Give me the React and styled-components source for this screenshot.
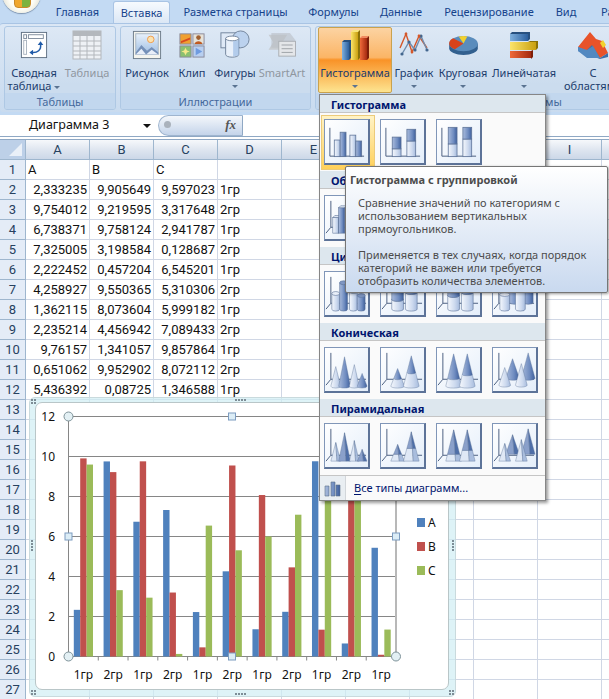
import React from "react";
import styled, { createGlobalStyle } from "styled-components";

const SERIES_A = [2.333235, 9.754012, 6.738371, 7.325005, 2.222452, 4.258927, 1.362115, 2.235214, 9.76157, 0.651062, 5.436392];
const SERIES_B = [9.905649, 9.219595, 9.758124, 3.198584, 0.457204, 9.550365, 8.073604, 4.456942, 1.341057, 9.952902, 0.08725];
const SERIES_C = [9.597023, 3.317648, 2.941787, 0.128687, 6.545201, 5.310306, 5.999182, 7.089433, 9.857864, 8.072112, 1.346588];
const COLUMNS = ["A", "B", "C", "D", "E", "F", "G", "H", "I"];
const TOTAL_ROWS = 27;

const TABS = [
    { label: "Главная", w: 71 },
    { label: "Вставка", w: 57, active: true },
    { label: "Разметка страницы", w: 131 },
    { label: "Формулы", w: 65 },
    { label: "Данные", w: 70 },
    { label: "Рецензирование", w: 106 },
    { label: "Вид", w: 48 },
    { label: "Разработчик", w: 90 },
];

const GlobalStyle = createGlobalStyle`
    html, body {
        margin: 0;
        width: 609px;
        height: 699px;
        overflow: hidden;
        background: #fff;
        font-family: "Noto Sans", "Liberation Sans", sans-serif;
    }
`;

const Page = styled.div`
    position: relative;
    width: 609px;
    height: 699px;
    overflow: hidden;
    background: #fff;
`;

const Header = styled.div`
    background: #c3daf3;
    height: 115px;
    overflow: hidden;
`;

const TabRow = styled.div`
    display: flex;
    height: 23px;
    padding-left: 42px;
    align-items: flex-end;
`;

const Tab = styled.div`
    flex: none;
    box-sizing: border-box;
    width: ${(p) => p.$w}px;
    height: ${(p) => (p.$active ? 22 : 23)}px;
    line-height: 23px;
    text-align: center;
    font-size: 11px;
    white-space: nowrap;
    color: #15428b;
    ${(p) =>
        p.$active &&
        `
        line-height: 21px;
        background: linear-gradient(#f6fafe, #dbe7f5);
        border: 1px solid #a9c4e4;
        border-bottom: none;
        border-radius: 3px 3px 0 0;
    `}
`;

const OfficeButton = styled.div`
    position: absolute;
    left: 2px;
    top: -27px;
    width: 39px;
    height: 40px;
    border-radius: 50%;
    background: radial-gradient(circle at 50% 60%, #fdfdf6 40%, #d8d5c4 78%, #8d8f8c 100%);
    box-shadow: 0 1px 1px rgba(60, 80, 110, 0.5);

    &::after {
        content: "";
        position: absolute;
        left: 12px;
        top: 26px;
        width: 15px;
        height: 7px;
        border-radius: 0 0 4px 4px;
        background: linear-gradient(90deg, #f0a72e 50%, #7cb33e 50%);
        border: 1px solid #c98a2a;
    }
`;

const Ribbon = styled.div`
    display: flex;
    gap: 4px;
    height: 89px;
    box-sizing: border-box;
    padding: 2px 0 2px 4px;
    background: linear-gradient(#dbe7f5, #c9dbef);
    border-top: 1px solid #a9c4e4;
    border-radius: 3px 0 0 3px;
`;

const Group = styled.div`
    flex: none;
    box-sizing: border-box;
    width: ${(p) => p.$w}px;
    display: flex;
    flex-direction: column;
    border: 1px solid #aec8e4;
    border-radius: 3px;
    background: linear-gradient(#dde8f5, #cbdcee 70%);
    overflow: hidden;
`;

const GroupBody = styled.div`
    flex: 1;
    display: flex;
    padding: 0 ${(p) => p.$pad || 3}px;
`;

const GroupLabel = styled.div`
    height: 16px;
    line-height: 17px;
    text-align: center;
    font-size: 11px;
    color: #45699c;
    background: #c2d7ee;
`;

const BigButton = styled.div`
    flex: none;
    box-sizing: border-box;
    width: ${(p) => p.$w}px;
    height: 66px;
    display: flex;
    flex-direction: column;
    align-items: center;
    padding-top: 3px;
    font-size: 11px;
    line-height: 13px;
    white-space: nowrap;
    color: ${(p) => (p.$disabled ? "#8f979f" : "#1c3c6c")};
    ${(p) =>
        p.$active &&
        `
        padding-top: 2px;
        background: linear-gradient(#fcd3a2, #fbb566 46%, #f99227 50%, #fde490);
        border: 1px solid #c9a24e;
        border-radius: 2px;
        color: #1c3c6c;
    `}
`;

const IconSlot = styled.div`
    height: 30px;
    margin-bottom: 6px;
    display: flex;
    align-items: center;
    justify-content: center;
`;

const Caret = styled.span`
    display: inline-block;
    width: 0;
    height: 0;
    vertical-align: middle;
    margin: ${(p) => (p.$inline ? "0 0 0 3px" : "0")};
    border-left: 3px solid transparent;
    border-right: 3px solid transparent;
    border-top: 3px solid #5a7391;
`;

const CaretLine = styled.div`
    height: 13px;
    line-height: 11px;
`;

const FormulaBar = styled.div`
    display: flex;
    height: 22px;
    box-sizing: border-box;
    background: #fff;
    border-bottom: 1px solid #8fa8c4;
`;

const NameBox = styled.div`
    position: relative;
    flex: none;
    width: 158px;
    box-sizing: border-box;
    padding-left: 29px;
    line-height: 20px;
    font-size: 12.5px;
    color: #111;

    &::after {
        content: "";
        position: absolute;
        right: 7px;
        top: 9px;
        border-left: 4px solid transparent;
        border-right: 4px solid transparent;
        border-top: 4px solid #111;
    }
`;

const FormulaButtons = styled.div`
    position: relative;
    flex: none;
    width: 85px;
    height: 21px;
    box-sizing: border-box;
    border: 1px solid #9fb5cf;
    border-right: 1px solid #8fa8c4;
    border-radius: 11px 0 0 11px;
    background: linear-gradient(#f4f7fb, #c4d4ea);
    font-family: "Liberation Serif", serif;
    font-style: italic;
    font-weight: 700;
    font-size: 13px;
    color: #555;
    text-align: right;
    padding-right: 6px;
    line-height: 18px;

    &::before {
        content: "";
        position: absolute;
        left: 5px;
        top: 5px;
        width: 7px;
        height: 7px;
        border-radius: 50%;
        background: #aab2bc;
    }
`;

const BarGap = styled.div`
    height: 2px;
    background: #fff;
    border-bottom: 1px solid #8fa8c4;
`;

const Sheet = styled.div`
    display: grid;
    grid-template-columns: 26px repeat(${COLUMNS.length}, 64px) 64px;
    grid-auto-rows: 20px;
    font-family: Roboto, "Noto Sans", sans-serif;
    font-size: 13px;
`;

const CornerCell = styled.div`
    position: relative;
    background: #bdd0e8;
    border-right: 1px solid #9eb6ce;
    border-bottom: 1px solid #9eb6ce;

    &::after {
        content: "";
        position: absolute;
        right: 3px;
        bottom: 3px;
        border-left: 13px solid transparent;
        border-bottom: 13px solid #eaf0f8;
    }
`;

const ColHead = styled.div`
    box-sizing: border-box;
    line-height: 19px;
    text-align: center;
    color: #27415f;
    background: linear-gradient(#f6f8fb, #dfe6f0 50%, #ccd8e8);
    border-right: 1px solid #9eb6ce;
    border-bottom: 1px solid #9eb6ce;
`;

const RowHead = styled.div`
    box-sizing: border-box;
    line-height: 19px;
    text-align: center;
    color: #27415f;
    background: #e4ecf7;
    border-right: 1px solid #9eb6ce;
    border-bottom: 1px solid #9eb6ce;
`;

const Cell = styled.div`
    box-sizing: border-box;
    line-height: 19px;
    padding: 0 2px;
    white-space: nowrap;
    overflow: hidden;
    color: #111;
    text-align: ${(p) => (p.$num ? "right" : "left")};
    border-right: 1px solid #d0d7e5;
    border-bottom: 1px solid #d0d7e5;
`;

const ChartFrame = styled.div`
    position: absolute;
    left: 29px;
    top: 397px;
    width: 427px;
    height: 300px;
    box-sizing: border-box;
    padding: 4px 5px 6px;
    border-radius: 6px;
    background: rgba(208, 238, 243, 0.7);
    border: 1px solid #c9dadd;
`;

const ChartInner = styled.div`
    width: 414px;
    height: 288px;
    box-sizing: border-box;
    background: #fff;
    border: 1px solid #b9c6c8;
    border-radius: 7px;
    overflow: hidden;
`;

const ChartSvg = styled.svg`
    display: block;
    font-family: "Noto Sans", "Liberation Sans", sans-serif;
`;

const AxisText = styled.text`
    font-size: 12px;
    fill: #111;
`;

const FrameDots = styled.div`
    position: absolute;
    display: grid;
    grid-template-columns: repeat(${(p) => p.$cols}, 2px);
    gap: 1px;
    ${(p) => p.$at}

    i {
        width: 2px;
        height: 2px;
        background: #7d8d96;
    }
`;

const ChartMenu = styled.div`
    position: absolute;
    left: 319px;
    top: 94px;
    width: 227px;
    height: 407px;
    box-sizing: border-box;
    background: #fafafa;
    border: 1px solid #868686;
    box-shadow: 2px 2px 3px rgba(0, 0, 0, 0.4);
    display: flex;
    flex-direction: column;
`;

const MenuHeading = styled.div`
    height: 18px;
    box-sizing: border-box;
    padding-left: 11px;
    line-height: 19px;
    font-size: 11px;
    font-weight: 700;
    color: #00156e;
    background: #dde7ee;
    border-bottom: 1px solid #c5c5c5;
    overflow: hidden;
`;

const TileRow = styled.div`
    display: flex;
    gap: 10px;
    padding: 6px 0 6px 4px;
`;

const TileSlot = styled.div`
    position: relative;
    width: 46px;
    height: 46px;

    ${(p) =>
        p.$selected &&
        `
        &::before {
            content: "";
            position: absolute;
            inset: -4px -5px -5px -3px;
            background: linear-gradient(#fff3c6, #ffd059);
            border: 1px solid #eccb7a;
        }
    `}
`;

const Tile = styled.div`
    position: relative;
    width: 46px;
    height: 46px;
    box-sizing: border-box;
    background: linear-gradient(135deg, #ffffff, #e4eefa);
    border: 1px solid #8096b8;
    border-right: 2px solid #5d7398;
    border-bottom: 2px solid #5d7398;
`;

const MenuFooter = styled.div`
    margin-top: auto;
    height: 25px;
    display: flex;
    border-top: 1px solid #c5c5c5;
    font-size: 11px;
    color: #00156e;
`;

const FooterIcon = styled.div`
    flex: none;
    width: 25px;
    display: flex;
    align-items: center;
    justify-content: center;
    background: #e9eef2;
    border-right: 1px solid #d2d6da;
`;

const FooterLabel = styled.div`
    padding-left: 8px;
    line-height: 23px;

    u {
        text-underline-offset: 2px;
    }
`;

const Tooltip = styled.div`
    position: absolute;
    left: 345px;
    top: 166px;
    width: 263px;
    height: 127px;
    box-sizing: border-box;
    padding: 6px 4px;
    border: 1px solid #767676;
    border-radius: 2px;
    background: linear-gradient(#ffffff, #c9d9ef);
    box-shadow: 1px 1px 3px rgba(0, 0, 0, 0.4);
    font-size: 11px;
    line-height: 13px;
    color: #4c4c4c;
    white-space: nowrap;
`;

const TooltipTitle = styled.div`
    font-weight: 700;
    margin-bottom: 10px;
`;

const TooltipBody = styled.div`
    padding-left: 8px;

    & + & {
        margin-top: 13px;
    }
`;

const Defs = () => (
    <svg width="0" height="0" style={{ position: "absolute" }}>
        <defs>
            <linearGradient id="tileDark" x1="0" x2="1" y1="0" y2="0">
                <stop offset="0" stopColor="#a9bbdc" />
                <stop offset="0.6" stopColor="#6f8cc0" />
                <stop offset="1" stopColor="#3e5f9c" />
            </linearGradient>
            <linearGradient id="tileLight" x1="0" x2="1" y1="0" y2="0">
                <stop offset="0" stopColor="#f5f8fd" />
                <stop offset="0.6" stopColor="#ccd9ee" />
                <stop offset="1" stopColor="#a6bbdd" />
            </linearGradient>
            <linearGradient id="iconBlue" x1="0" x2="1" y1="0" y2="0">
                <stop offset="0" stopColor="#7fb0dd" />
                <stop offset="1" stopColor="#2b5f9e" />
            </linearGradient>
            <linearGradient id="iconRed" x1="0" x2="1" y1="0" y2="0">
                <stop offset="0" stopColor="#ef6a3a" />
                <stop offset="1" stopColor="#a52a10" />
            </linearGradient>
            <linearGradient id="iconYellow" x1="0" x2="1" y1="0" y2="0">
                <stop offset="0" stopColor="#fbe46a" />
                <stop offset="1" stopColor="#c9a010" />
            </linearGradient>
            <linearGradient id="sky" x1="0" x2="0" y1="0" y2="1">
                <stop offset="0" stopColor="#e8f1fb" />
                <stop offset="1" stopColor="#9dbde2" />
            </linearGradient>
        </defs>
    </svg>
);

const tone = (dark) => (dark ? "url(#tileDark)" : "url(#tileLight)");
const EDGE = "#5d7398";

const Axis2D = () => <path d="M5 8V37H40" fill="none" stroke="#4c5f80" />;
const Axis3D = () => <path d="M6 5V32M6 32L1 38M6 32H42" fill="none" stroke="#4c5f80" />;

const Column = ({ x, w, top, bottom = 37, dark }) => (
    <rect x={x + 0.5} y={top + 0.5} width={w} height={bottom - top} fill={tone(dark)} stroke={EDGE} strokeWidth="0.8" />
);

const Box = ({ x, w, top, bottom = 38, dark }) => (
    <g stroke={EDGE} strokeWidth="0.6">
        <rect x={x} y={top} width={w} height={bottom - top} fill={tone(dark)} />
        <path d={`M${x} ${top}l2 -2h${w}l-2 2z`} fill="#e2eaf6" />
        <path d={`M${x + w} ${top}l2 -2v${bottom - top}l-2 2z`} fill="#6c86b4" />
    </g>
);

const Cylinder = ({ cx, rx, top, bottom = 38, dark }) => (
    <g stroke={EDGE} strokeWidth="0.6">
        <path
            d={`M${cx - rx} ${top}V${bottom}A${rx} 2 0 0 0 ${cx + rx} ${bottom}V${top}z`}
            fill={tone(dark)}
        />
        <ellipse cx={cx} cy={top} rx={rx} ry="2" fill={dark ? "#7f97c4" : "#e8eef8"} />
    </g>
);

const Cone = ({ cx, rx, top, split, bottom = 39, dark }) => {
    if (split === undefined) {
        return (
            <path
                d={`M${cx} ${top}L${cx + rx} ${bottom}A${rx} 2 0 0 1 ${cx - rx} ${bottom}z`}
                fill={tone(dark)}
                stroke={EDGE}
                strokeWidth="0.4"
            />
        );
    }
    const r = (rx * (split - top)) / (bottom - top);
    return (
        <g stroke={EDGE} strokeWidth="0.4">
            <path
                d={`M${cx - r} ${split}L${cx - rx} ${bottom}A${rx} 2 0 0 0 ${cx + rx} ${bottom}L${cx + r} ${split}z`}
                fill={tone(false)}
            />
            <path d={`M${cx} ${top}L${cx + r} ${split}A${r} 1.5 0 0 1 ${cx - r} ${split}z`} fill={tone(true)} />
        </g>
    );
};

const Pyramid = ({ cx, rx, top, split, bottom = 38, dark }) => {
    const mid = cx + rx * 0.25;
    if (split === undefined) {
        return (
            <g stroke={EDGE} strokeWidth="0.4">
                <path d={`M${cx} ${top}L${cx - rx} ${bottom}H${mid}z`} fill={dark ? "#8aa0ca" : "#dfe8f5"} />
                <path d={`M${cx} ${top}L${mid} ${bottom}H${cx + rx}z`} fill={dark ? "#4f6fa8" : "#a9bddd"} />
            </g>
        );
    }
    const r = (rx * (split - top)) / (bottom - top);
    const m = cx + r * 0.25;
    return (
        <g stroke={EDGE} strokeWidth="0.4">
            <path d={`M${cx - r} ${split}L${cx - rx} ${bottom}H${mid}L${m} ${split}z`} fill="#dfe8f5" />
            <path d={`M${m} ${split}L${mid} ${bottom}H${cx + rx}L${cx + r} ${split}z`} fill="#a9bddd" />
            <path d={`M${cx} ${top}L${cx - r} ${split}H${m}z`} fill="#8aa0ca" />
            <path d={`M${cx} ${top}L${m} ${split}H${cx + r}z`} fill="#4f6fa8" />
        </g>
    );
};

// keeps the clustered / stacked / 100% / deep arrangement shared between cone and pyramid rows
const spikes = (Shape) => [
    <>
        <Shape cx={11} rx={5} top={19} />
        <Shape cx={20} rx={6} top={9} dark />
        <Shape cx={30} rx={5} top={17} />
        <Shape cx={38} rx={5} top={26} dark />
    </>,
    <>
        <Shape cx={17} rx={7} top={21} split={31} />
        <Shape cx={31} rx={8} top={8} split={25} />
    </>,
    <>
        <Shape cx={17} rx={8} top={6} split={31} />
        <Shape cx={31} rx={8} top={6} split={27} />
    </>,
    <>
        <Shape cx={20} rx={7} top={11} bottom={31} dark />
        <Shape cx={36} rx={7} top={5} bottom={31} dark />
        <Shape cx={12} rx={6} top={20} bottom={38} />
        <Shape cx={29} rx={6} top={16} bottom={38} />
    </>,
];

const SECTIONS = [
    {
        title: "Гистограмма",
        axis: <Axis2D />,
        tiles: [
            <>
                <Column x={9} w={6} top={20} />
                <Column x={15} w={6} top={12} dark />
                <Column x={25} w={6} top={15} />
                <Column x={31} w={6} top={21} dark />
            </>,
            <>
                <Column x={11} w={9} top={29} />
                <Column x={11} w={9} top={17} bottom={29} dark />
                <Column x={26} w={9} top={21} />
                <Column x={26} w={9} top={9} bottom={21} dark />
            </>,
            <>
                <Column x={11} w={9} top={24} />
                <Column x={11} w={9} top={7} bottom={24} dark />
                <Column x={26} w={9} top={19} />
                <Column x={26} w={9} top={7} bottom={19} dark />
            </>,
        ],
    },
    {
        title: "Объемная гистограмма",
        axis: <Axis3D />,
        tiles: [
            <>
                <Box x={8} w={6} top={22} />
                <Box x={14} w={6} top={12} dark />
                <Box x={24} w={6} top={18} />
                <Box x={30} w={6} top={24} dark />
            </>,
            <>
                <Box x={11} w={9} top={28} />
                <Box x={11} w={9} top={16} bottom={28} dark />
                <Box x={26} w={9} top={20} />
                <Box x={26} w={9} top={9} bottom={20} dark />
            </>,
            <>
                <Box x={11} w={9} top={24} />
                <Box x={11} w={9} top={7} bottom={24} dark />
                <Box x={26} w={9} top={20} />
                <Box x={26} w={9} top={7} bottom={20} dark />
            </>,
            <>
                <Box x={18} w={7} top={14} bottom={31} dark />
                <Box x={32} w={7} top={8} bottom={31} dark />
                <Box x={10} w={7} top={20} />
                <Box x={24} w={7} top={16} />
            </>,
        ],
    },
    {
        title: "Цилиндрическая",
        axis: <Axis3D />,
        tiles: [
            <>
                <Cylinder cx={11} rx={4} top={22} />
                <Cylinder cx={19} rx={4} top={11} dark />
                <Cylinder cx={29} rx={4} top={20} />
                <Cylinder cx={37} rx={4} top={24} dark />
            </>,
            <>
                <Cylinder cx={17} rx={6} top={28} />
                <Cylinder cx={17} rx={6} top={17} bottom={28} dark />
                <Cylinder cx={31} rx={6} top={21} />
                <Cylinder cx={31} rx={6} top={9} bottom={21} dark />
            </>,
            <>
                <Cylinder cx={17} rx={6} top={24} />
                <Cylinder cx={17} rx={6} top={7} bottom={24} dark />
                <Cylinder cx={31} rx={6} top={21} />
                <Cylinder cx={31} rx={6} top={7} bottom={21} dark />
            </>,
            <>
                <Cylinder cx={22} rx={5} top={16} bottom={31} dark />
                <Cylinder cx={36} rx={5} top={10} bottom={31} dark />
                <Cylinder cx={12} rx={5} top={23} />
                <Cylinder cx={28} rx={5} top={19} />
            </>,
        ],
    },
    { title: "Коническая", axis: <Axis3D />, tiles: spikes(Cone) },
    { title: "Пирамидальная", axis: <Axis3D />, tiles: spikes(Pyramid) },
];

const PivotIcon = () => (
    <svg width="28" height="28" viewBox="0 0 30 30">
        <rect x="1.5" y="1.5" width="27" height="27" fill="#fff" stroke="#5e6e80" />
        <rect x="4" y="4" width="3" height="4" fill="#fff" stroke="#7f8c9c" />
        <rect x="9" y="4" width="16" height="4" fill="#fff" stroke="#7f8c9c" />
        <rect x="4" y="10" width="3" height="15" fill="#fff" stroke="#a8b2be" />
        <path d="M12 23c7 1 11-3 10-9" fill="none" stroke="#1f5aa8" strokeWidth="1.6" />
        <path d="M19 15l3-4 3 4zM14 20v6l-4-3z" fill="#1f5aa8" />
    </svg>
);

const TableIcon = () => (
    <svg width="30" height="30" viewBox="0 0 30 30">
        <rect x="1" y="1" width="28" height="28" fill="#eef1f5" stroke="#b3b7bc" />
        <rect x="1" y="1" width="28" height="5" fill="#b4b8bd" />
        <path d="M8 1V29M15 1V29M22 1V29M1 11H29M1 16H29M1 21H29M1 25H29" stroke="#b3b7bc" fill="none" />
    </svg>
);

const PictureIcon = () => (
    <svg width="30" height="30" viewBox="0 0 32 32">
        <rect x="1.5" y="1.5" width="29" height="29" fill="#f4f4ee" stroke="#6b7a88" />
        <rect x="4" y="4" width="24" height="22" fill="url(#sky)" stroke="#a8b4c0" />
        <circle cx="20" cy="10" r="3.5" fill="#fbe3b0" stroke="#ee9a4a" />
        <path d="M4 24l6-8 6 6 5-4 7 6v2H4z" fill="#7590b8" />
        <path d="M4 26l6-6 5 6zM15 26l6-5 7 5z" fill="#e8eef8" />
    </svg>
);

const ClipIcon = () => (
    <svg width="26" height="26" viewBox="0 0 28 28">
        <rect x="1" y="2" width="12" height="11" fill="#f0a030" stroke="#889" />
        <path d="M2 10l10-4v2l-10 4z" fill="#d84a20" />
        <rect x="15" y="2" width="12" height="11" fill="#e6e2d8" stroke="#889" />
        <circle cx="21" cy="6" r="2.5" fill="#a06030" />
        <path d="M17 13c0-4 8-4 8 0z" fill="#c05a20" />
        <rect x="1" y="15" width="12" height="12" fill="#8cc070" stroke="#889" />
        <path d="M7 17l1.5 3 3 1-3 1-1.5 3-1.5-3-3-1 3-1z" fill="#f6e98a" />
        <rect x="15" y="15" width="12" height="12" fill="#b8cff0" stroke="#889" />
        <path d="M18 17l7 4-7 4z" fill="#6f9be0" />
    </svg>
);

const ShapesIcon = () => (
    <svg width="30" height="30" viewBox="0 0 32 32">
        <rect x="1" y="3" width="20" height="16" fill="#dfe9f6" stroke="#70829a" />
        <circle cx="22" cy="10" r="9" fill="#bcd2ee" stroke="#70829a" />
        <path d="M6 9v17c0 4 14 4 14 0V9z" fill="#e8f0fa" stroke="#70829a" />
        <ellipse cx="13" cy="9" rx="7" ry="2.5" fill="#ffffff" stroke="#70829a" />
        <path d="M14 12v16c4 0 6-1 6-2V11z" fill="#9dbce4" opacity="0.7" />
    </svg>
);

const SmartArtIcon = () => (
    <svg width="31" height="26" viewBox="0 0 32 28">
        <path d="M1 3h20l-5 8 5 8H1l5-8z" fill="#c7ccd1" />
        <path d="M4 1h20l6 8-6 8H4z" fill="#b9bec4" opacity="0.6" />
        <rect x="12" y="10" width="18" height="16" fill="#e4e6e9" stroke="#a9adb2" />
        <path d="M15 14h12M15 18h12M15 22h12" stroke="#9ca0a5" />
    </svg>
);

const ColumnChartIcon = () => (
    <svg width="30" height="30" viewBox="0 0 30 30">
        <path d="M2 12h7v18H2z" fill="url(#iconBlue)" />
        <path d="M2 12l2-2h7l-2 2zM9 12l2-2v18l-2 2z" fill="#27507f" />
        <path d="M11 2h7v28h-7z" fill="url(#iconYellow)" />
        <path d="M11 2l2-2h7l-2 2z" fill="#f7e57c" />
        <path d="M18 2l2-2v28l-2 2z" fill="#8c7208" />
        <path d="M20 8h7v22h-7z" fill="url(#iconRed)" />
        <path d="M20 8l2-2h7l-2 2z" fill="#f08a60" />
        <path d="M27 8l2-2v22l-2 2z" fill="#7e1e08" />
    </svg>
);

const LineChartIcon = () => (
    <svg width="30" height="26" viewBox="0 0 30 26">
        <path d="M1 16L7 2l6 18 7-16 8 12" fill="none" stroke="#d4572a" strokeWidth="1.4" />
        <path d="M3 22l7-12 6 8 6-14 6 14" fill="none" stroke="#6f8dae" strokeWidth="1.4" />
        <g fill="#42668e">
            <circle cx="3" cy="22" r="1.6" />
            <circle cx="10" cy="10" r="1.6" />
            <circle cx="16" cy="18" r="1.6" />
            <circle cx="22" cy="4" r="1.6" />
            <circle cx="28" cy="18" r="1.6" />
        </g>
        <g fill="#d4572a">
            <circle cx="7" cy="2" r="1.4" />
            <circle cx="13" cy="20" r="1.4" />
            <circle cx="20" cy="4" r="1.4" />
        </g>
    </svg>
);

const PieIcon = () => (
    <svg width="31" height="21" viewBox="0 0 32 22">
        <path d="M1 9v5c0 4 7 7 15 7s15-3 15-7V9z" fill="#32608f" />
        <ellipse cx="16" cy="9" rx="15" ry="8" fill="#5a8cbc" />
        <path d="M16 9L5 3.5C2 5 1 7 1 9c0 3 3 5 6 6z" fill="#d8431c" />
        <path d="M16 9L11 1.5c3-.7 7-.7 9 0z" fill="#f2d12f" />
    </svg>
);

const BarChartIcon = () => (
    <svg width="30" height="28" viewBox="0 0 30 28">
        <path d="M1 3h18v7H1z" fill="url(#iconBlue)" />
        <path d="M1 3l2-2h18l-2 2zM19 3l2-2v7l-2 2z" fill="#27507f" />
        <path d="M1 11h26v8H1z" fill="url(#iconYellow)" />
        <path d="M19 11l2-1h8l-2 1zM27 11l2-1v7l-2 2z" fill="#8c7208" />
        <path d="M1 20h21v7H1z" fill="url(#iconRed)" />
        <path d="M22 20l2-1v7l-2 2z" fill="#7e1e08" />
    </svg>
);

const AreaIcon = () => (
    <svg width="32" height="28" viewBox="0 0 32 28">
        <path d="M1 16L13 1l6 7 6 2 6 12-8 5L1 16z" fill="#e8532a" />
        <path d="M23 12l3-3 3 5-3 3z" fill="#f2d12f" />
        <path d="M1 16l8 4 6-6 8 13 8-5v4l-8 2L1 20z" fill="#3b6fa8" />
        <path d="M1 16l9 3 6-4 7 12H10L1 20z" fill="#5288c0" />
    </svg>
);

const AllChartsIcon = () => (
    <svg width="17" height="17" viewBox="0 0 17 17">
        <path d="M1 6h4v10H1zM7 2h4v14H7zM12 5h4v11h-4z" fill="url(#tileDark)" stroke="#5d6f88" strokeWidth="0.6" />
    </svg>
);

const RibbonButton = ({ w, label, icon, disabled, active, caret = true, children }) => (
    <BigButton $w={w} $disabled={disabled} $active={active}>
        <IconSlot>{icon}</IconSlot>
        {children || (
            <>
                <div>{label}</div>
                {caret && (
                    <CaretLine>
                        <Caret />
                    </CaretLine>
                )}
            </>
        )}
    </BigButton>
);

const CornerDots = ({ at, cols = 2, count = 4 }) => (
    <FrameDots $cols={cols} $at={at}>
        {Array.from({ length: count }, (_, i) => (
            <i key={i} />
        ))}
    </FrameDots>
);

// plot area in page coordinates, the viewBox starts where the white chart starts
const PLOT = { left: 68.5, right: 396, top: 416.5, bottom: 656.5, unit: 20 };
const CATEGORY_W = (PLOT.right - PLOT.left) / SERIES_A.length;
const BAR_W = 6.4;
const BAR_SERIES = [
    { name: "A", color: "#4f81bd", values: SERIES_A },
    { name: "B", color: "#c0504d", values: SERIES_B },
    { name: "C", color: "#9bbb59", values: SERIES_C },
];

const PlotHandle = ({ x, y, round }) =>
    round ? (
        <circle cx={x} cy={y} r="4.5" fill="#e3f0f4" stroke="#7e9299" />
    ) : (
        <rect x={x - 3.5} y={y - 3.5} width="7" height="7" fill="#dcedf6" stroke="#7d9cc0" />
    );

const Chart = () => (
    <ChartSvg width="412" height="286" viewBox="36 403 412 286">
        {[0, 2, 4, 6, 8, 10, 12].map((v) => (
            <g key={v}>
                <line
                    x1={PLOT.left}
                    x2={PLOT.right}
                    y1={PLOT.bottom - v * PLOT.unit}
                    y2={PLOT.bottom - v * PLOT.unit}
                    stroke="#868686"
                />
                <AxisText x="55" y={PLOT.bottom - v * PLOT.unit + 4.5} textAnchor="end">
                    {v}
                </AxisText>
            </g>
        ))}
        <line x1={PLOT.left} x2={PLOT.left} y1={PLOT.top} y2={PLOT.bottom} stroke="#868686" />
        <line x1={PLOT.right} x2={PLOT.right} y1={PLOT.top} y2={PLOT.bottom} stroke="#b8b8b8" strokeWidth="2" />
        {SERIES_A.map((_, i) => {
            const start = PLOT.left + i * CATEGORY_W;
            return (
                <g key={i}>
                    <line x1={start} x2={start} y1={PLOT.bottom} y2={PLOT.bottom + 4} stroke="#868686" />
                    {BAR_SERIES.map((s, j) => (
                        <rect
                            key={s.name}
                            x={start + 5.3 + j * BAR_W}
                            y={PLOT.bottom - s.values[i] * PLOT.unit}
                            width={BAR_W}
                            height={s.values[i] * PLOT.unit}
                            fill={s.color}
                        />
                    ))}
                    <AxisText x={start + CATEGORY_W / 2} y="679" textAnchor="middle">
                        {i % 2 ? "2гр" : "1гр"}
                    </AxisText>
                </g>
            );
        })}
        <PlotHandle x={PLOT.left} y={PLOT.top} round />
        <PlotHandle x={PLOT.right} y={PLOT.top} round />
        <PlotHandle x={PLOT.left} y={PLOT.bottom} round />
        <PlotHandle x={PLOT.right} y={PLOT.bottom} round />
        <PlotHandle x="232" y={PLOT.top} />
        <PlotHandle x="232" y={PLOT.bottom} />
        <PlotHandle x={PLOT.left} y="536.5" />
        <PlotHandle x={PLOT.right} y="536.5" />
        {BAR_SERIES.map((s, i) => (
            <g key={s.name}>
                <rect x="417" y={518 + i * 24} width="8" height="9" fill={s.color} />
                <AxisText x="428" y={527 + i * 24}>
                    {s.name}
                </AxisText>
            </g>
        ))}
    </ChartSvg>
);

const sheetCell = (v) => String(v).replace(".", ",");

const App = () => (
    <Page>
        <GlobalStyle />
        <Defs />
        <Header>
            <TabRow>
                {TABS.map((t) => (
                    <Tab key={t.label} $w={t.w} $active={t.active}>
                        {t.label}
                    </Tab>
                ))}
            </TabRow>
            <Ribbon>
                <Group $w={112}>
                    <GroupBody>
                        <RibbonButton w={52} icon={<PivotIcon />}>
                            <div>Сводная</div>
                            <div>
                                таблица
                                <Caret $inline />
                            </div>
                        </RibbonButton>
                        <RibbonButton w={54} icon={<TableIcon />} label="Таблица" disabled caret={false} />
                    </GroupBody>
                    <GroupLabel>Таблицы</GroupLabel>
                </Group>
                <Group $w={191}>
                    <GroupBody>
                        <RibbonButton w={46} icon={<PictureIcon />} label="Рисунок" caret={false} />
                        <RibbonButton w={44} icon={<ClipIcon />} label="Клип" caret={false} />
                        <RibbonButton w={42} icon={<ShapesIcon />} label="Фигуры" />
                        <RibbonButton w={52} icon={<SmartArtIcon />} label="SmartArt" disabled caret={false} />
                    </GroupBody>
                    <GroupLabel>Иллюстрации</GroupLabel>
                </Group>
                <Group $w={430}>
                    <GroupBody $pad={2}>
                        <RibbonButton w={74} icon={<ColumnChartIcon />} label="Гистограмма" active />
                        <RibbonButton w={44} icon={<LineChartIcon />} label="График" />
                        <RibbonButton w={54} icon={<PieIcon />} label="Круговая" />
                        <RibbonButton w={68} icon={<BarChartIcon />} label="Линейчатая" />
                        <RibbonButton w={70} icon={<AreaIcon />} caret={false}>
                            <div>С</div>
                            <div>областями</div>
                        </RibbonButton>
                    </GroupBody>
                    <GroupLabel>Диаграммы</GroupLabel>
                </Group>
            </Ribbon>
        </Header>
        <FormulaBar>
            <NameBox>Диаграмма 3</NameBox>
            <FormulaButtons>fx</FormulaButtons>
        </FormulaBar>
        <BarGap />
        <Sheet>
            <CornerCell />
            {COLUMNS.map((c) => (
                <ColHead key={c}>{c}</ColHead>
            ))}
            <ColHead />
            {Array.from({ length: TOTAL_ROWS }, (_, r) => {
                let cells = ["", "", "", ""];
                if (r === 0) cells = ["A", "B", "C", ""];
                else if (r <= SERIES_A.length) {
                    const k = r - 1;
                    cells = [SERIES_A[k], SERIES_B[k], SERIES_C[k], k % 2 ? "2гр" : "1гр"];
                }
                return (
                    <React.Fragment key={r}>
                        <RowHead>{r + 1}</RowHead>
                        {[...COLUMNS, ""].map((c, i) => (
                            <Cell key={c} $num={typeof cells[i] === "number"}>
                                {cells[i] === undefined ? "" : sheetCell(cells[i])}
                            </Cell>
                        ))}
                    </React.Fragment>
                );
            })}
        </Sheet>
        <OfficeButton />
        <ChartFrame>
            <ChartInner>
                <Chart />
            </ChartInner>
            <CornerDots at="left: 1px; top: 1px;" />
            <CornerDots at="right: 1px; top: 1px;" />
            <CornerDots at="left: 1px; bottom: 1px;" />
            <CornerDots at="right: 1px; bottom: 1px;" />
            <CornerDots at="left: 1px; top: 142px;" cols={1} />
            <CornerDots at="right: 1px; top: 142px;" cols={1} />
            <CornerDots at="left: 205px; top: 1px;" cols={4} />
            <CornerDots at="left: 205px; bottom: 1px;" cols={4} />
        </ChartFrame>
        <ChartMenu>
            {SECTIONS.map((section, s) => (
                <div key={section.title}>
                    <MenuHeading>{section.title}</MenuHeading>
                    <TileRow>
                        {section.tiles.map((art, t) => (
                            <TileSlot key={t} $selected={s === 0 && t === 0}>
                                <Tile>
                                    <svg width="43" height="43" viewBox="0 0 44 44">
                                        {section.axis}
                                        {art}
                                    </svg>
                                </Tile>
                            </TileSlot>
                        ))}
                    </TileRow>
                </div>
            ))}
            <MenuFooter>
                <FooterIcon>
                    <AllChartsIcon />
                </FooterIcon>
                <FooterLabel>
                    <u>В</u>се типы диаграмм...
                </FooterLabel>
            </MenuFooter>
        </ChartMenu>
        <Tooltip>
            <TooltipTitle>Гистограмма с группировкой</TooltipTitle>
            <TooltipBody>
                Сравнение значений по категориям с<br />
                использованием вертикальных
                <br />
                прямоугольников.
            </TooltipBody>
            <TooltipBody>
                Применяется в тех случаях, когда порядок
                <br />
                категорий не важен или требуется
                <br />
                отобразить количества элементов.
            </TooltipBody>
        </Tooltip>
    </Page>
);

export default App;
